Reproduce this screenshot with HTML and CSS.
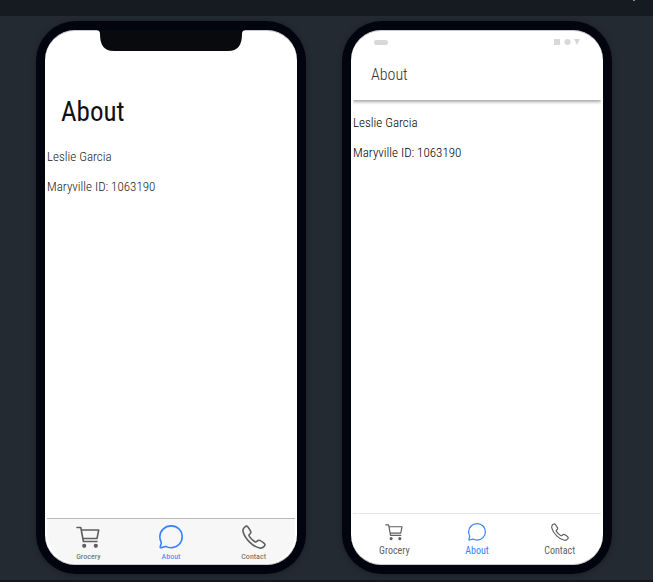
FILE: index.html
```html
<!DOCTYPE html>
<html lang="en">
<head>
<meta charset="utf-8">
<title>About</title>
<link rel="stylesheet" href="styles.css">
</head>
<body>
<svg class="sprite" aria-hidden="true">
  <symbol id="cart" viewBox="0 0 24 24">
    <path d="M1 2.500h3.800l2.600 14H21M5.400 5h17.300l-1.700 8.500H6.900"/>
    <circle class="dot" cx="8.200" cy="20.800" r="1.300"/><circle class="dot" cx="19.800" cy="20.800" r="1.300"/>
  </symbol>
  <symbol id="chat" viewBox="0 0 24 24">
    <path d="M2 22.700c-.7.2-1-.3-.8-.9l1.200-4.200C1.300 15.600.8 13.700.8 11.800.8 5.700 5.800.9 12.200.9 18.500.9 23.200 5.600 23.200 11.700c0 6.200-4.800 11-11.200 11-1.800 0-3.800-.5-5.400-1.300z"/>
  </symbol>
  <symbol id="phone" viewBox="0 0 24 24">
    <path d="M22.200 18.400c-1.300-1.200-3.100-2.300-4.500-3-1.400-.7-2.100.2-2.900 1.100-.7.8-1.300.7-2.300 0-1.800-1.200-3.700-3.100-5-4.900-.7-1-.8-1.600 0-2.300.9-.7 1.800-1.500 1.200-2.800-.8-1.800-1.900-3.300-3-4.700C5 .9 3.900 1 2.900 1.800 1.300 3 .6 4.700 1.100 6.800c.9 3.500 3.400 7.300 6.500 10.300 3.100 3.100 6.700 5.200 10 5.900 2.100.4 3.800-.4 4.900-2 .6-.9.600-1.900-.3-2.600z"/>
  </symbol>
</svg>
<header class="topbar"><span class="topbar-mark"></span></header>
<main class="stage">
  <section class="phone ios" aria-label="iOS preview">
    <svg class="notch" viewBox="0 0 150 21" aria-hidden="true"><path d="M0 0h150q-4 0-4 4c0 11-4 17-14 17H18C8 21 4 15 4 4q0-4-4-4z"/></svg>
    <div class="screen">
      <h1 class="title">About</h1>
      <div class="content"><p>Leslie Garcia</p><p>Maryville ID: 1063190</p></div>
      <nav class="tabs">
        <a class="tab" href="#grocery"><svg class="icon"><use href="#cart"/></svg><span>Grocery</span></a>
        <a class="tab active" href="#about"><svg class="icon"><use href="#chat"/></svg><span>About</span></a>
        <a class="tab" href="#contact"><svg class="icon"><use href="#phone"/></svg><span>Contact</span></a>
      </nav>
    </div>
  </section>
  <section class="phone android" aria-label="Android preview">
    <div class="screen">
      <header class="toolbar">
        <div class="status"><span class="pill"></span>
          <svg class="signals" viewBox="0 0 26 6" aria-hidden="true"><path d="M0 0h6v6H0zM20 0h6l-3 6z"/><circle cx="13.500" cy="3" r="3"/></svg>
        </div>
        <h1 class="title">About</h1>
      </header>
      <div class="content"><p>Leslie Garcia</p><p>Maryville ID: 1063190</p></div>
      <nav class="tabs">
        <a class="tab" href="#grocery"><svg class="icon"><use href="#cart"/></svg><span>Grocery</span></a>
        <a class="tab active" href="#about"><svg class="icon"><use href="#chat"/></svg><span>About</span></a>
        <a class="tab" href="#contact"><svg class="icon"><use href="#phone"/></svg><span>Contact</span></a>
      </nav>
    </div>
  </section>
</main>
</body>
</html>
```
FILE: styles.css
```css
* { box-sizing: border-box; }
body {
  margin: 0;
  min-height: 100vh;
  display: flex;
  flex-direction: column;
  background: #242a32;
  border-bottom: 2px solid #14161e;
  font-family: "Roboto Condensed", "Open Sans Condensed", Roboto, "Liberation Sans", sans-serif;
  font-weight: 300;
}
.sprite { position: absolute; width: 0; height: 0; }
.topbar {
  display: flex;
  justify-content: flex-end;
  height: 16px;
  padding-right: 18px;
  background: #161a21;
}
.topbar-mark { width: 2px; height: 1px; background: #8b8e93; }
.stage {
  flex: 1;
  display: flex;
  gap: 36px;
  padding: 5px 41px 6px 36px;
}
.phone {
  position: relative;
  flex: 1;
  display: flex;
  padding: 9px;
  border-radius: 40px;
  background: #02050f;
  box-shadow: 0 1px 5px rgba(20, 20, 28, .5);
}
.screen {
  flex: 1;
  display: flex;
  flex-direction: column;
  padding: 0 2px;
  overflow: hidden;
  border: 1px solid #c9cacc;
  border-width: 1px 0;
  border-radius: 30px;
  background: #fff;
}
.notch {
  position: absolute;
  top: 9px;
  left: 50%;
  width: 150px;
  height: 21px;
  margin-left: -75px;
  fill: #090a0d;
}
.title { margin: 0; font-weight: 300; }
.content { flex: 1; font-size: 13px; line-height: 18px; color: #222; }
.content p { margin: 0 0 12px; }
.tabs { display: flex; }
.tab {
  flex: 1;
  display: flex;
  flex-direction: column;
  align-items: center;
  color: #5f5f5f;
  font-weight: 400;
  text-decoration: none;
}
.tab.active { color: #3880ff; }
.icon { fill: none; stroke: currentColor; stroke-width: 1.600; stroke-linecap: round; stroke-linejoin: round; }
.dot { fill: currentColor; }

.ios .title { padding: 63px 14px 0; font-size: 27px; line-height: 36px; font-weight: 400; color: #111; }
.ios .content { padding-top: 18px; }
.ios .tabs { padding: 6px 0 1px; border-top: 1px solid #b8b8b8; border-radius: 0 0 32px 32px; background: #f7f7f7; }
.ios .icon { width: 24px; height: 24px; }
.ios .tab { gap: 2px; font-size: 8px; line-height: 12px; }

.toolbar {
  padding: 8px 18px 13px;
  box-shadow: 0 2px 3px rgba(0, 0, 0, .35);
  clip-path: inset(0 0 -6px);
}
.status { display: flex; justify-content: space-between; align-items: center; padding: 0 3px; }
.pill { width: 14px; height: 5px; border-radius: 3px; background: #d8d8d8; }
.signals { width: 26px; height: 6px; fill: #d8d8d8; }
.android .title { padding-top: 18px; font-size: 16px; line-height: 24px; color: #303030; }
.android .content { padding-top: 14px; color: #000; }
.android .tabs { padding: 9px 0 7px; border-top: 1px solid #e6e6e6; }
.android .icon { width: 18px; height: 18px; }
.android .tab { gap: 4px; font-size: 10px; line-height: 12px; }
```
